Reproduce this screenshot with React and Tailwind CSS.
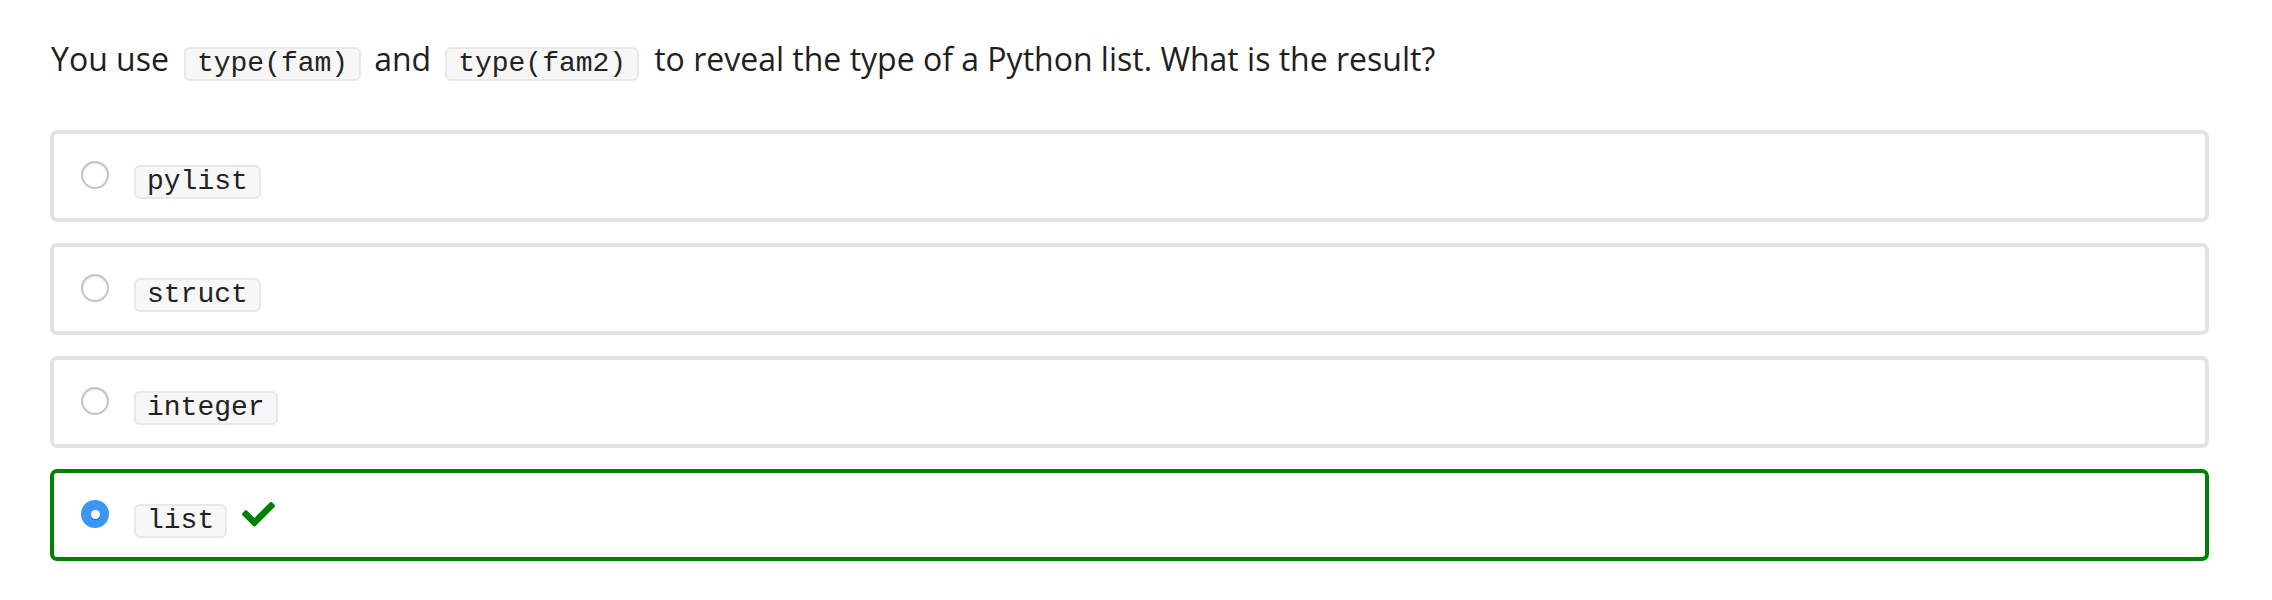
import { useState } from "react";

const options = ["pylist", "struct", "integer", "list"];
const correct = "list";

// Bout de code en ligne
function Code({ children }) {
  return (
    <code className="inline-block h-[34px] px-[11px] border-2 border-[#e8e8e8] bg-[#f7f7f7] rounded-[6px] text-[28px] leading-[30px] text-[#222] font-['Liberation_Mono',monospace]">
      {children}
    </code>
  );
}

function Radio({ checked }) {
  if (checked) {
    return (
      <span className="w-[28px] h-[28px] shrink-0 rounded-full bg-[#3b97f7] flex items-center justify-center">
        <span className="w-[9px] h-[9px] rounded-full bg-white shadow-[0_1px_1px_rgba(0,0,0,0.35)]" />
      </span>
    );
  }
  return (
    <span className="w-[28px] h-[28px] shrink-0 rounded-full bg-white border-2 border-[#c4c4c4] shadow-[inset_0_1px_2px_rgba(0,0,0,0.12)]" />
  );
}

function CheckIcon() {
  return (
    <svg viewBox="0 72 512 376" className="w-[33px] h-[25px] mt-[-2px] ml-[15px] fill-[#008000]">
      <path d="M173.898 439.404l-166.4-166.4c-9.997-9.997-9.997-26.206 0-36.204l36.203-36.204c9.997-9.998 26.207-9.998 36.204 0L192 312.69 432.095 72.596c9.997-9.997 26.207-9.997 36.204 0l36.203 36.204c9.997 9.997 9.997 26.206 0 36.204l-294.4 294.401c-9.998 9.997-26.207 9.997-36.204-.001z" />
    </svg>
  );
}

export default function App() {
  const [selected, setSelected] = useState(correct);

  return (
    <div className="bg-white h-[600px] overflow-hidden pl-[50px] pr-[63px] pt-[47px] font-['Open_Sans',sans-serif] text-[#1f1f1f]">
      <div className="flex items-baseline h-[34px] ml-[1px] text-[32px] leading-[24px] whitespace-nowrap">
        <span>You use</span>
        <span className="ml-[15px] mr-[13px] flex"><Code>type(fam)</Code></span>
        <span>and</span>
        <span className="ml-[14px] mr-[15px] flex"><Code>type(fam2)</Code></span>
        <span>to reveal the type of a Python list. What is the result?</span>
      </div>

      <div className="mt-[49px] flex flex-col gap-[21px]">
        {options.map(opt => {
          const isSel = selected === opt;
          return (
            <div
              key={opt}
              onClick={() => setSelected(opt)}
              className={`flex items-start pl-[27px] pt-[27px] pb-[19px] border-4 rounded-[7px] cursor-pointer ${isSel
                ? "border-[#008000]"
                : "border-[#e3e3e3]"
                }`}
            >
              <Radio checked={isSel} />
              <div className="flex items-start mt-[4px] ml-[25px]">
                <Code>{opt}</Code>
                {isSel && opt === correct && <CheckIcon />}
              </div>
            </div>
          );
        })}
      </div>
    </div>
  );
}
